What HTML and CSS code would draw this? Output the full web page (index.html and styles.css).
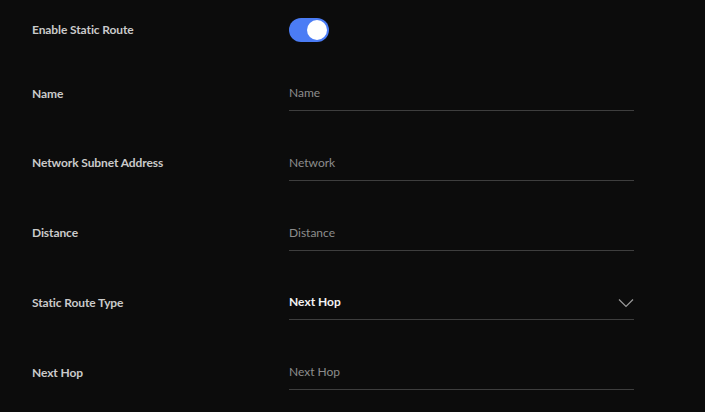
FILE: index.html
```html
<!DOCTYPE html>
<html>
<head>
<meta charset="utf-8">
<link rel="stylesheet" href="styles.css">
</head>
<body>
<div class="form">
  <div class="row toggle-row">
    <div class="label">Enable Static Route</div>
    <div class="toggle"><span class="knob"></span></div>
  </div>
  <div class="fields">
    <div class="row">
      <div class="label">Name</div>
      <div class="input"><span class="placeholder">Name</span></div>
    </div>
    <div class="row">
      <div class="label">Network Subnet Address</div>
      <div class="input"><span class="placeholder">Network</span></div>
    </div>
    <div class="row">
      <div class="label">Distance</div>
      <div class="input"><span class="placeholder">Distance</span></div>
    </div>
    <div class="row">
      <div class="label">Static Route Type</div>
      <div class="input select"><span class="value">Next Hop</span>
        <svg class="chev" width="16" height="10" viewBox="0 0 16 10"><path d="M1 1.5 L8 8.5 L15 1.5" fill="none" stroke="#9a9a9a" stroke-width="1.2"/></svg>
      </div>
    </div>
    <div class="row">
      <div class="label">Next Hop</div>
      <div class="input"><span class="placeholder">Next Hop</span></div>
    </div>
  </div>
</div>
</body>
</html>
```
FILE: styles.css
```css
html, body {
  margin: 0;
  padding: 0;
  background: #0c0c0c;
  font-family: Lato, "Open Sans", sans-serif;
  font-size: 12px;
}
.form {
  padding: 18px 0 0 32px;
  width: 602px;
}
.row {
  display: flex;
  align-items: center;
}
.label {
  width: 257px;
  color: #cacaca;
  font-weight: 700;
  font-size: 12px;
  letter-spacing: -0.1px;
  padding-bottom: 4px;
}
.toggle-row {
  height: 24px;
  margin-bottom: 37px;
}
.toggle-row .label {
  padding-bottom: 2px;
}
.toggle {
  width: 40px;
  height: 24px;
  border-radius: 12px;
  background: #4b7cf5;
  display: flex;
  align-items: center;
  justify-content: flex-end;
  padding: 0 2px;
  box-sizing: border-box;
}
.knob {
  width: 20px;
  height: 20px;
  border-radius: 50%;
  background: #fff;
}
.fields {
  display: flex;
  flex-direction: column;
  gap: 37.75px;
}
.input {
  flex: 0 0 345px;
  height: 32px;
  box-sizing: border-box;
  border-bottom: 1px solid #3e3e3e;
  display: flex;
  align-items: center;
  justify-content: space-between;
  padding-bottom: 4px;
}
.placeholder {
  color: #8c8c8c;
  font-size: 12px;
}
.value {
  color: #f2f2f2;
  font-weight: 700;
  font-size: 12px;
}
.chev {
  display: block;
  margin-top: 2px;
}
```
